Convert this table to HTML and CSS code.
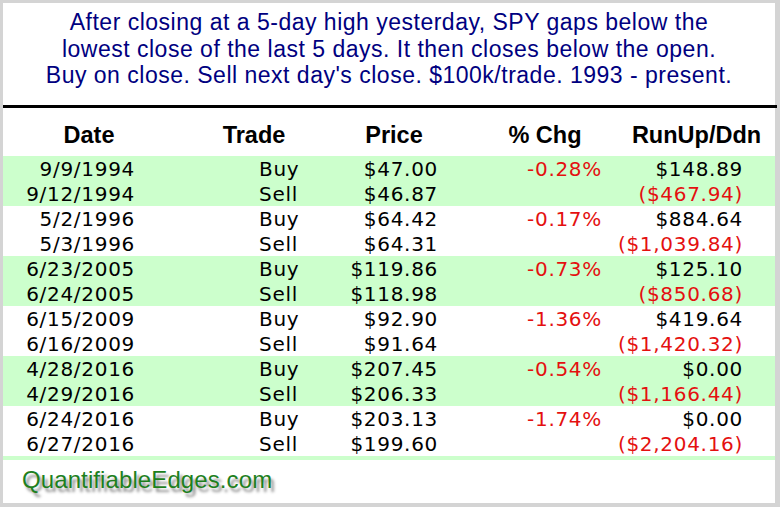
FILE: index.html
```html
<!DOCTYPE html>
<html>
<head>
<meta charset="utf-8">
<link rel="stylesheet" href="styles.css">
</head>
<body>
<div class="frame">
  <div class="title">
    <div>After closing at a 5-day high yesterday, SPY gaps below the</div>
    <div>lowest close of the last 5 days. It then closes below the open.</div>
    <div>Buy on close. Sell next day's close. $100k/trade. 1993 - present.</div>
  </div>
  <div class="rule"></div>
  <div class="grid head">
    <div class="h c1">Date</div>
    <div class="h c2">Trade</div>
    <div class="h c3">Price</div>
    <div class="h c4">% Chg</div>
    <div class="h c5">RunUp/Ddn</div>
  </div>
  <div class="pair green">
    <div class="grid row"><div class="c1">9/9/1994</div><div class="c2">Buy</div><div class="c3">$47.00</div><div class="c4 red">-0.28%</div><div class="c5">$148.89</div></div>
    <div class="grid row"><div class="c1">9/12/1994</div><div class="c2">Sell</div><div class="c3">$46.87</div><div class="c4"></div><div class="c5 red">($467.94)</div></div>
  </div>
  <div class="pair">
    <div class="grid row"><div class="c1">5/2/1996</div><div class="c2">Buy</div><div class="c3">$64.42</div><div class="c4 red">-0.17%</div><div class="c5">$884.64</div></div>
    <div class="grid row"><div class="c1">5/3/1996</div><div class="c2">Sell</div><div class="c3">$64.31</div><div class="c4"></div><div class="c5 red">($1,039.84)</div></div>
  </div>
  <div class="pair green">
    <div class="grid row"><div class="c1">6/23/2005</div><div class="c2">Buy</div><div class="c3">$119.86</div><div class="c4 red">-0.73%</div><div class="c5">$125.10</div></div>
    <div class="grid row"><div class="c1">6/24/2005</div><div class="c2">Sell</div><div class="c3">$118.98</div><div class="c4"></div><div class="c5 red">($850.68)</div></div>
  </div>
  <div class="pair">
    <div class="grid row"><div class="c1">6/15/2009</div><div class="c2">Buy</div><div class="c3">$92.90</div><div class="c4 red">-1.36%</div><div class="c5">$419.64</div></div>
    <div class="grid row"><div class="c1">6/16/2009</div><div class="c2">Sell</div><div class="c3">$91.64</div><div class="c4"></div><div class="c5 red">($1,420.32)</div></div>
  </div>
  <div class="pair green">
    <div class="grid row"><div class="c1">4/28/2016</div><div class="c2">Buy</div><div class="c3">$207.45</div><div class="c4 red">-0.54%</div><div class="c5">$0.00</div></div>
    <div class="grid row"><div class="c1">4/29/2016</div><div class="c2">Sell</div><div class="c3">$206.33</div><div class="c4"></div><div class="c5 red">($1,166.44)</div></div>
  </div>
  <div class="pair">
    <div class="grid row"><div class="c1">6/24/2016</div><div class="c2">Buy</div><div class="c3">$203.13</div><div class="c4 red">-1.74%</div><div class="c5">$0.00</div></div>
    <div class="grid row"><div class="c1">6/27/2016</div><div class="c2">Sell</div><div class="c3">$199.60</div><div class="c4"></div><div class="c5 red">($2,204.16)</div></div>
  </div>
  <div class="strip"></div>
  <div class="footer">QuantifiableEdges.com</div>
</div>
</body>
</html>
```
FILE: styles.css
```css
html, body {
  margin: 0;
  padding: 0;
  background: #d4d4d4;
}
.frame {
  box-sizing: border-box;
  width: 780px;
  height: 507px;
  border-style: solid;
  border-color: #d4d4d4;
  border-width: 3px 5px 4px 3px;
  background: #ffffff;
  display: flex;
  flex-direction: column;
}
.title {
  height: 102px;
  box-sizing: border-box;
  padding-top: 6px;
  font-family: "Liberation Sans", Arial, sans-serif;
  font-size: 23px;
  letter-spacing: 0.5px;
  line-height: 26.5px;
  color: #000080;
  text-align: center;
}
.rule {
  height: 3px;
  background: #000000;
  margin-right: -2px;
}
.grid {
  display: grid;
  grid-template-columns: 172px 158px 122px 147px 173px;
}
.head {
  height: 48px;
  align-items: center;
  font-family: "Liberation Sans", Arial, sans-serif;
  font-weight: bold;
  font-size: 23.5px;
  color: #000000;
}
.h {
  text-align: center;
  padding-top: 7px;
  white-space: nowrap;
}
.head .c4 {
  padding-left: 33px;
}
.head .c5 {
  padding-left: 16px;
}
.row {
  height: 25px;
  line-height: 27px;
  font-family: "DejaVu Sans", Verdana, sans-serif;
  font-size: 20px;
  letter-spacing: 0.7px;
  color: #000000;
  white-space: nowrap;
}
.row .c1 { text-align: right; padding-right: 40px; }
.row .c2 { text-align: left; padding-left: 84px; }
.row .c3 { text-align: right; padding-right: 17px; }
.row .c4 { text-align: right; padding-right: 0; }
.row .c5 { text-align: right; padding-right: 32px; }
.red { color: #e41010; }
.green { background: #ccffcc; }
.strip {
  height: 4px;
  background: #ccffcc;
}
.footer {
  flex: 1;
  display: flex;
  align-items: center;
  padding-left: 19px;
  padding-bottom: 3px;
  font-family: "Liberation Sans", Arial, sans-serif;
  font-size: 24px;
  letter-spacing: 0.1px;
  color: #1e801e;
  text-shadow: 3px 4px 3px #8a8a8a;
}
```
